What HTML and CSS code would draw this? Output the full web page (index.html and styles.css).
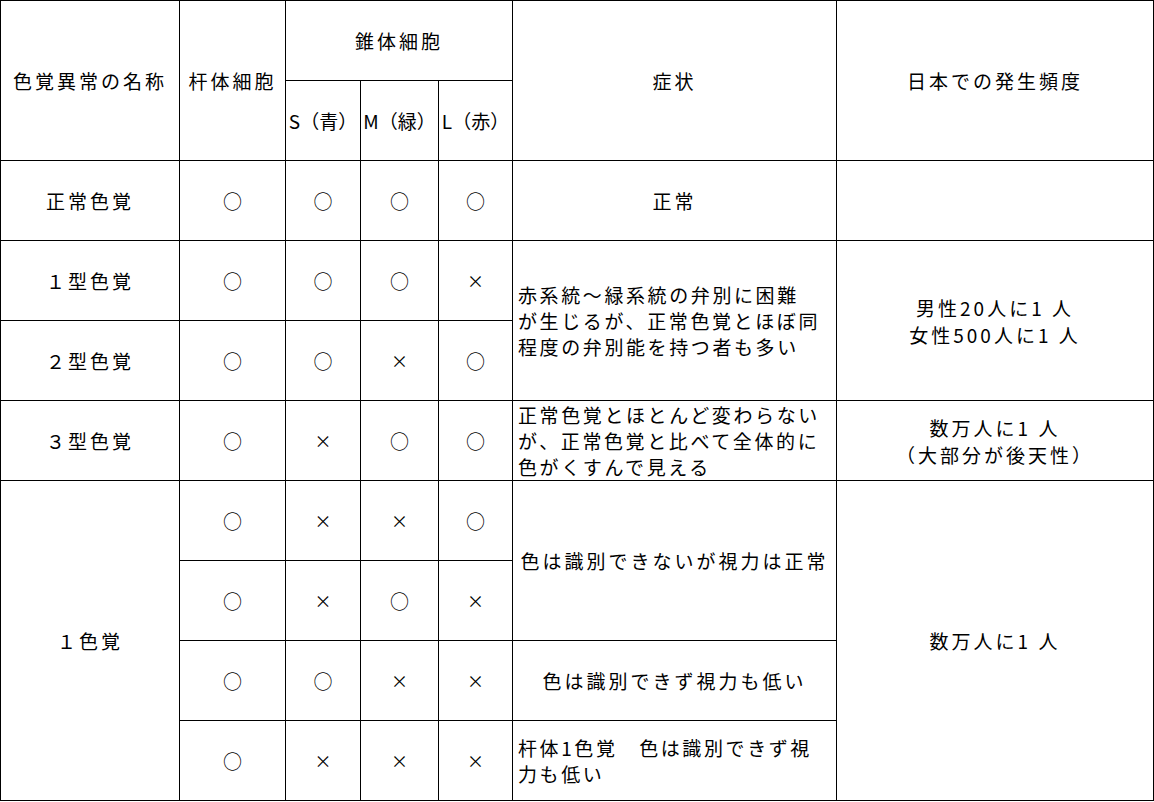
FILE: index.html
```html
<!DOCTYPE html>
<html lang="ja">
<head>
<meta charset="utf-8">
<title>色覚異常</title>
<link rel="stylesheet" href="styles.css">
</head>
<body>
<table class="tbl">
  <colgroup>
    <col class="c-name">
    <col class="c-rod">
    <col class="c-s">
    <col class="c-m">
    <col class="c-l">
    <col class="c-sym">
    <col class="c-freq">
  </colgroup>
  <tr>
    <td rowspan="2">色覚異常の名称</td>
    <td rowspan="2">杆体細胞</td>
    <td colspan="3">錐体細胞</td>
    <td rowspan="2">症状</td>
    <td rowspan="2">日本での発生頻度</td>
  </tr>
  <tr>
    <td class="cone">S（青）</td>
    <td class="cone">M（緑）</td>
    <td class="cone">L（赤）</td>
  </tr>
  <tr>
    <td>正常色覚</td>
    <td class="mk">○</td><td class="mk">○</td><td class="mk">○</td><td class="mk">○</td>
    <td>正常</td>
    <td></td>
  </tr>
  <tr>
    <td>１型色覚</td>
    <td class="mk">○</td><td class="mk">○</td><td class="mk">○</td><td class="mk x">×</td>
    <td rowspan="2" class="left">赤系統〜緑系統の弁別に困難<br>が生じるが、正常色覚とほぼ同<br>程度の弁別能を持つ者も多い</td>
    <td rowspan="2" class="freq">男性20人に1 人<br>女性500人に1 人</td>
  </tr>
  <tr>
    <td>２型色覚</td>
    <td class="mk">○</td><td class="mk">○</td><td class="mk x">×</td><td class="mk">○</td>
  </tr>
  <tr>
    <td>３型色覚</td>
    <td class="mk">○</td><td class="mk x">×</td><td class="mk">○</td><td class="mk">○</td>
    <td class="left">正常色覚とほとんど変わらない<br>が、正常色覚と比べて全体的に<br>色がくすんで見える</td>
    <td class="freq">数万人に1 人<br>（大部分が後天性）</td>
  </tr>
  <tr>
    <td rowspan="4">１色覚</td>
    <td class="mk">○</td><td class="mk x">×</td><td class="mk x">×</td><td class="mk">○</td>
    <td rowspan="2">色は識別できないが視力は正常</td>
    <td rowspan="4">数万人に1 人</td>
  </tr>
  <tr>
    <td class="mk">○</td><td class="mk x">×</td><td class="mk">○</td><td class="mk x">×</td>
  </tr>
  <tr>
    <td class="mk">○</td><td class="mk">○</td><td class="mk x">×</td><td class="mk x">×</td>
    <td>色は識別できず視力も低い</td>
  </tr>
  <tr>
    <td class="mk">○</td><td class="mk x">×</td><td class="mk x">×</td><td class="mk x">×</td>
    <td class="left">杆体1色覚　色は識別できず視<br>力も低い</td>
  </tr>
</table>
</body>
</html>
```
FILE: styles.css
```css
html, body {
  margin: 0;
  padding: 0;
  background: #fff;
}

.tbl {
  border-collapse: collapse;
  table-layout: fixed;
  width: 1153px;
  font-family: "Noto Sans CJK JP", "Noto Sans", sans-serif;
  font-size: 19px;
  color: #000;
}

.c-name { width: 179px; }
.c-rod { width: 106px; }
.c-s { width: 75px; }
.c-m { width: 78px; }
.c-l { width: 74px; }
.c-sym { width: 324px; }
.c-freq { width: 317px; }

.tbl td {
  border: 1px solid #000;
  height: 79px;
  padding: 0;
  text-align: center;
  vertical-align: middle;
  letter-spacing: 3px;
  line-height: 26px;
  overflow: hidden;
  white-space: nowrap;
}

.tbl td.cone {
  letter-spacing: 0;
}

.tbl td.left {
  text-align: left;
  padding-left: 5px;
  letter-spacing: 2.6px;
}

.tbl td.freq {
  line-height: 27px;
}

.tbl td.mk {
  letter-spacing: 0;
  font-size: 19px;
}

.tbl td.mk.x {
  font-size: 17px;
}
```
